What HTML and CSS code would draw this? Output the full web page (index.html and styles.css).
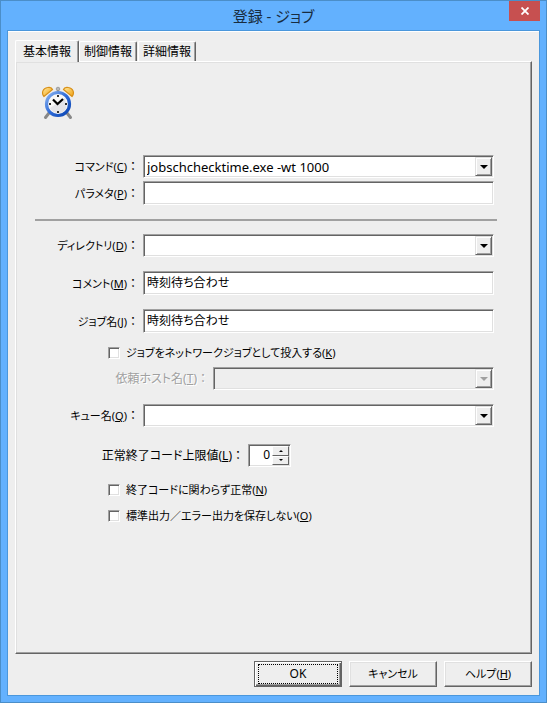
FILE: index.html
```html
<!DOCTYPE html>
<html lang="ja">
<head>
  <meta charset="UTF-8">
  <title>登録 - ジョブ</title>
  <link rel="stylesheet" href="styles.css">
</head>
<body>
  <div class="window">
    <div class="titlebar">
      <h1>登録 - ジョブ</h1>
      <button class="close" aria-label="閉じる">
        <svg width="8" height="8" viewBox="0 0 8 8"><path d="M0.5 0.5L7.5 7.5M7.5 0.5L0.5 7.5" stroke="#fff" stroke-width="1.8"/></svg>
      </button>
    </div>

    <form class="client" onsubmit="return false">
      <div class="tabs" role="tablist">
        <button type="button" class="tab active" role="tab" aria-selected="true">基本情報</button>
        <button type="button" class="tab" role="tab">制御情報</button>
        <button type="button" class="tab" role="tab">詳細情報</button>
      </div>

      <div class="panel">
        <svg class="clock" width="34" height="34" viewBox="0 0 34 34">
          <defs>
            <linearGradient id="gold" x1="0" y1="0" x2="1" y2="1">
              <stop offset="0" stop-color="#ffe9a0"/>
              <stop offset="1" stop-color="#f0a010"/>
            </linearGradient>
            <linearGradient id="blue" x1="0" y1="0" x2="1" y2="1">
              <stop offset="0" stop-color="#8ab4f0"/>
              <stop offset="0.5" stop-color="#2f6bd8"/>
              <stop offset="1" stop-color="#0a44b0"/>
            </linearGradient>
          </defs>
          <path d="M8 27L4.500 31.500M26 27L29.500 31.500" stroke="#888" stroke-width="3" stroke-linecap="round"/>
          <path d="M17 3v4" stroke="#888" stroke-width="2"/>
          <circle cx="17" cy="3" r="1.800" fill="#b8b8b8" stroke="#888" stroke-width="0.7"/>
          <path d="M3 10.500C0 7 2 2 6.500 1.500C9 1 11 2 11.500 3.500L3 10.500Z" fill="url(#gold)" stroke="#d89018" stroke-width="1.200"/>
          <path d="M31 10.500C34 7 32 2 27.500 1.500C25 1 23 2 22.500 3.500L31 10.500Z" fill="url(#gold)" stroke="#d89018" stroke-width="1.200"/>
          <circle cx="17" cy="18" r="11.500" fill="#f8f8f8" stroke="url(#blue)" stroke-width="3.200"/>
          <path d="M9 22A9 9 0 0 0 25.500 21.500L24 12Z" fill="#e4e4e8"/>
          <path d="M16 9h2v2h-2zM16 25h2v2h-2zM8 17h2v2h-2zM24 17h2v2h-2z" fill="#333"/>
          <path d="M12 13.500L16.500 18L22 13" fill="none" stroke="#000" stroke-width="2.200"/>
        </svg>

        <div class="row row-command">
          <label for="command" class="kana">コマンド(<u>C</u>)<span class="colon">：</span></label>
          <div class="combo">
            <select id="command"><option>jobschchecktime.exe -wt 1000</option></select>
            <span class="drop"></span>
          </div>
        </div>
        <div class="row row-param">
          <label for="param" class="kana">パラメタ(<u>P</u>)<span class="colon">：</span></label>
          <input type="text" id="param">
        </div>

        <hr>

        <div class="row row-dir">
          <label for="dir" class="kana">ディレクトリ(<u>D</u>)<span class="colon">：</span></label>
          <div class="combo">
            <select id="dir"><option></option></select>
            <span class="drop"></span>
          </div>
        </div>
        <div class="row row-text">
          <label for="comment" class="kana">コメント(<u>M</u>)<span class="colon">：</span></label>
          <input type="text" id="comment" value="時刻待ち合わせ">
        </div>
        <div class="row row-text">
          <label for="jobname" class="kana">ジョブ名(<u>J</u>)<span class="colon">：</span></label>
          <input type="text" id="jobname" value="時刻待ち合わせ">
        </div>

        <div class="check check-network">
          <input type="checkbox" id="network">
          <label for="network" class="kana">ジョブをネットワークジョブとして投入する(<u>K</u>)</label>
        </div>
        <div class="row row-host disabled">
          <label for="host">依頼ホスト名(<u>T</u>)<span class="colon">：</span></label>
          <div class="combo">
            <select id="host" disabled><option></option></select>
            <span class="drop"></span>
          </div>
        </div>

        <div class="row row-queue">
          <label for="queue" class="kana">キュー名(<u>Q</u>)<span class="colon">：</span></label>
          <div class="combo">
            <select id="queue"><option></option></select>
            <span class="drop"></span>
          </div>
        </div>

        <div class="row row-limit">
          <label for="limit">正常終了コード上限値(<u>L</u>)<span class="colon">：</span></label>
          <div class="spin">
            <input type="number" id="limit" value="0">
            <div class="spin-buttons">
              <button type="button" class="up" aria-label="増やす"></button>
              <button type="button" class="down" aria-label="減らす"></button>
            </div>
          </div>
        </div>

        <div class="check check-normal">
          <input type="checkbox" id="normal">
          <label for="normal" class="kana">終了コードに関わらず正常(<u>N</u>)</label>
        </div>
        <div class="check check-output">
          <input type="checkbox" id="nosave">
          <label for="nosave" class="kana">標準出力／エラー出力を保存しない(<u>O</u>)</label>
        </div>
      </div>

      <div class="actions">
        <button class="btn default"><span>OK</span></button>
        <button type="button" class="btn kana"><span>キャンセル</span></button>
        <button type="button" class="btn kana"><span>ヘルプ(<u>H</u>)</span></button>
      </div>
    </form>
  </div>

  <script>
    const limit = document.getElementById("limit");
    document.querySelector(".up").addEventListener("click", () => limit.stepUp());
    document.querySelector(".down").addEventListener("click", () => limit.stepDown());
  </script>
</body>
</html>
```
FILE: styles.css
```css
:root {
  --frame: #63b1fe;
  --frame-edge: #4b8ec8;
  --face: #eeeeee;
  --light: #ffffff;
  --soft: #e0e0e0;
  --shade: #a0a0a0;
  --dark: #646464;
}

* {
  box-sizing: border-box;
}

body {
  margin: 0;
  font-family: "Noto Sans", "Noto Sans CJK JP", sans-serif;
  font-size: 12px;
  line-height: 16px;
  font-feature-settings: "palt";
  color: #000;
}

button, input, select {
  font: inherit;
  font-feature-settings: inherit;
  color: inherit;
  margin: 0;
  padding: 0;
  border: none;
  border-radius: 0;
  appearance: none;
}

.window {
  min-height: 100vh;
  display: flex;
  flex-direction: column;
  background: var(--frame);
  border: 1px solid var(--frame-edge);
  padding: 0 6px 6px;
}

.titlebar {
  height: 29px;
  display: grid;
  grid-template-columns: 1fr auto 1fr;
  align-items: center;
}

.titlebar h1 {
  grid-column: 2;
  margin: 0;
  font-size: 15px;
  font-weight: 400;
  line-height: 28px;
  color: #182c40;
}

.close {
  width: 31px;
  height: 20px;
  justify-self: end;
  align-self: start;
  display: flex;
  align-items: center;
  justify-content: center;
  background: #c75050;
}

.client {
  flex: 1;
  display: flex;
  flex-direction: column;
  background: var(--face);
  border: 1px solid #4a97dc;
  box-shadow: inset 0 1px #fff;
  padding: 9px 7px 8px;
}

.tabs {
  display: flex;
  align-items: flex-end;
}

.tab {
  height: 20px;
  padding: 0 4px;
  margin-right: 1px;
  line-height: 18px;
  background: var(--face);
  border: 1px solid;
  border-color: var(--light) var(--dark) transparent var(--light);
  border-bottom: none;
  box-shadow: inset -1px 0 var(--shade);
  border-radius: 2px 2px 0 0;
}

.tab.active {
  height: 22px;
  padding: 0 7px;
  margin-right: 0;
  margin-bottom: -1px;
  z-index: 1;
}

.panel {
  flex: 1;
  padding: 24px 34px 24px 19px;
  border: 1px solid;
  border-color: var(--light) var(--dark) var(--dark) var(--light);
  box-shadow: inset -1px -1px var(--shade), inset 1px 1px var(--soft);
}

.clock {
  display: block;
  margin-left: 6px;
}

.row {
  display: grid;
  grid-template-columns: 104px 1fr;
  gap: 4px;
  align-items: center;
  margin-right: 3px;
}

.row label {
  text-align: right;
  white-space: nowrap;
}

.kana {
  font-size: 11px;
}

.colon {
  font-family: "Noto Sans CJK JP", sans-serif;
  font-size: 12px;
  font-feature-settings: normal;
}

input[type="text"], .combo, .spin {
  background: #fff;
  border: 1px solid;
  border-color: var(--shade) var(--light) var(--light) var(--shade);
  box-shadow: inset 1px 1px var(--dark), inset -1px -1px var(--soft);
}

input[type="text"] {
  width: 100%;
  height: 24px;
  padding: 0 3px 2px;
}

.combo {
  height: 23px;
  display: grid;
  grid-template-columns: 1fr 17px;
  padding: 1px;
}

.combo select {
  grid-area: 1 / 1 / 2 / 3;
  background: transparent;
  padding: 0 20px 0 2px;
  font-size: 13px;
}

.drop {
  grid-area: 1 / 2;
  display: flex;
  align-items: center;
  justify-content: center;
  background: var(--face);
  border: 1px solid;
  border-color: var(--soft) var(--dark) var(--dark) var(--soft);
  box-shadow: inset 1px 1px var(--light), inset -1px -1px var(--shade);
  pointer-events: none;
}

.drop::after {
  content: "";
  border: 4px solid transparent;
  border-top-color: #000;
  border-bottom: none;
}

.row-command {
  margin-top: 35px;
}

.row-param {
  margin-top: 3px;
}

hr {
  margin: 14px 0 13px;
  border: none;
  height: 2px;
  background: var(--shade);
}

.row-text {
  margin-top: 14px;
}

.check {
  display: flex;
  align-items: center;
  gap: 6px;
  margin-left: 73px;
}

.check input {
  width: 12px;
  height: 12px;
  background: #fff;
  border: 1px solid;
  border-color: var(--shade) var(--light) var(--light) var(--shade);
  box-shadow: inset 1px 1px var(--dark), inset -1px -1px var(--soft);
}

.check input:checked {
  background: #000;
}

.check-network {
  margin-top: 12px;
}

.row-host {
  grid-template-columns: 174px 1fr;
  margin-top: 6px;
}

.disabled {
  color: var(--shade);
}

.disabled label {
  text-shadow: 1px 1px #fff;
}

.disabled .combo {
  background: var(--face);
}

.disabled .drop::after {
  border-top-color: var(--shade);
}

.row-queue {
  margin-top: 14px;
}

.row-limit {
  grid-template-columns: 209px 43px;
  margin-top: 17px;
}

.spin {
  height: 23px;
  display: flex;
  padding: 1px;
}

.spin input {
  flex: 1;
  min-width: 0;
  background: transparent;
  text-align: right;
  padding: 0 2px 2px 0;
}

.spin input::-webkit-inner-spin-button {
  display: none;
}

.spin-buttons {
  width: 17px;
  display: flex;
  flex-direction: column;
}

.spin-buttons button {
  flex: 1;
  display: flex;
  align-items: center;
  justify-content: center;
  background: var(--face);
  border: 1px solid;
  border-color: var(--light) var(--dark) var(--dark) var(--light);
}

.up::after, .down::after {
  content: "";
  border: 2px solid transparent;
}

.up::after {
  border-bottom-color: #000;
  border-top: none;
}

.down::after {
  border-top-color: #000;
  border-bottom: none;
}

.check-normal {
  margin-top: 15px;
}

.check-output {
  margin-top: 10px;
}

.actions {
  display: flex;
  justify-content: flex-end;
  gap: 7px;
  margin-top: 7px;
}

.btn {
  width: 88px;
  height: 26px;
  padding: 2px;
  background: var(--face);
  border: 1px solid;
  border-color: var(--light) var(--dark) var(--dark) var(--light);
  box-shadow: inset -1px -1px var(--shade), inset 1px 1px var(--soft);
}

.btn.default {
  border-color: var(--dark);
  box-shadow: inset 1px 1px var(--light), inset -1px -1px var(--dark), inset -2px -2px var(--shade);
}

.btn span {
  display: block;
  line-height: 20px;
}

.btn.default span {
  margin: 0 1px;
  line-height: 18px;
  border: 1px dotted #000;
}
```
